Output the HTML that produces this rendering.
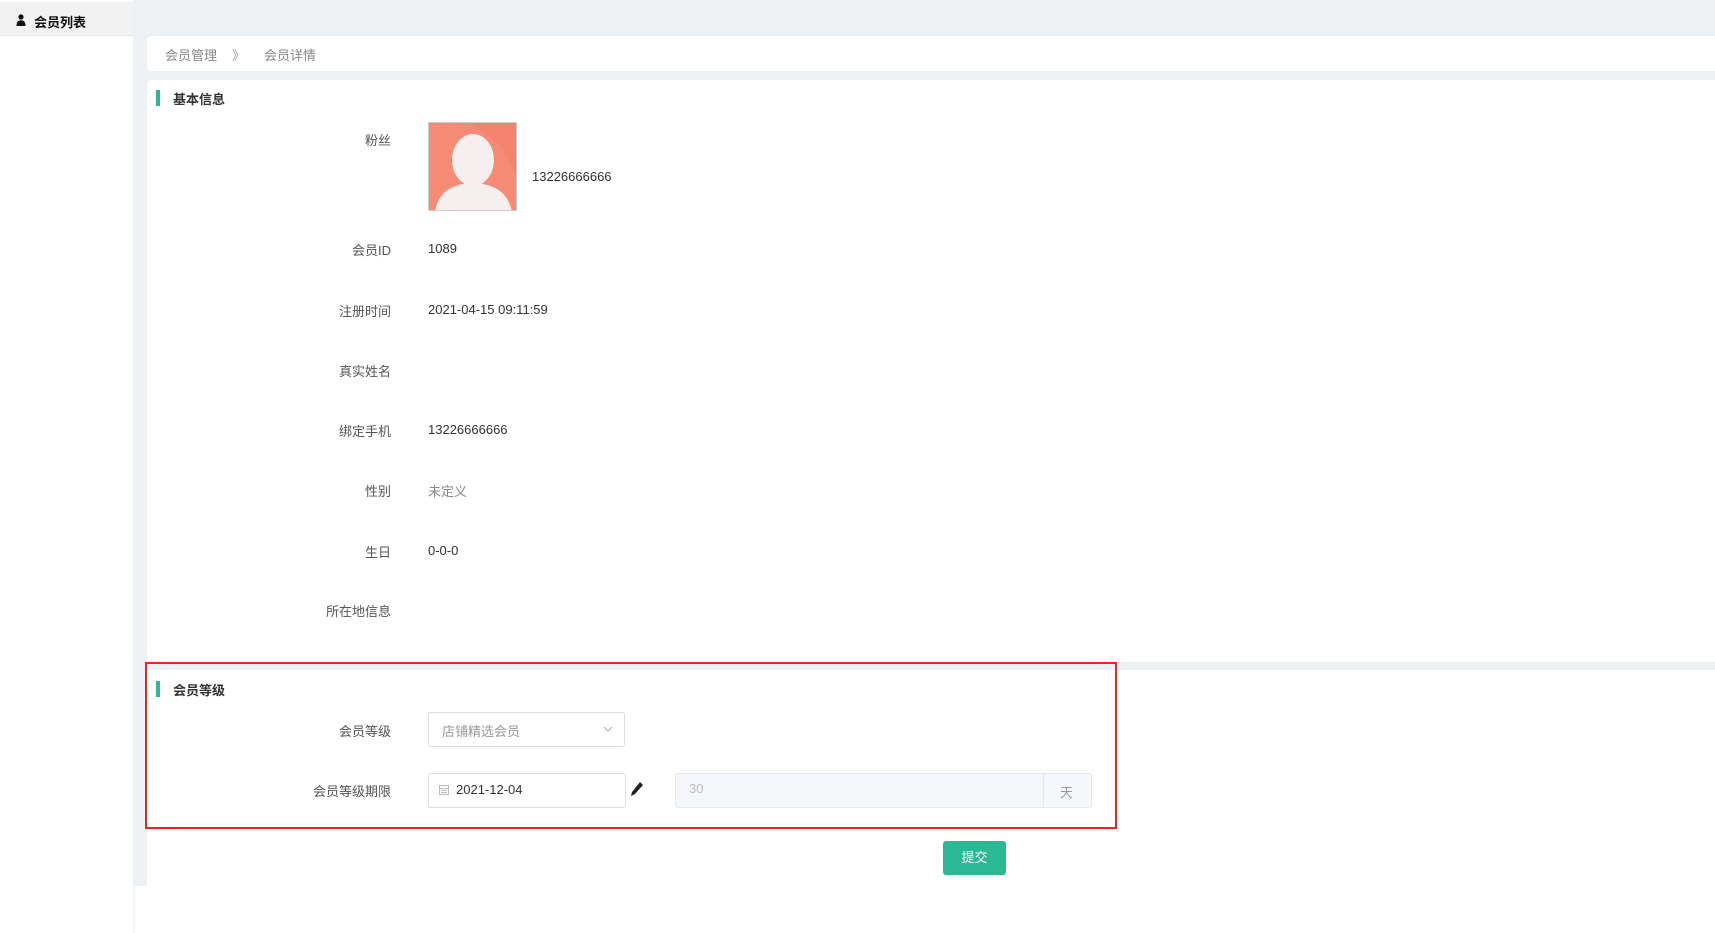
<!DOCTYPE html>
<html><head><meta charset="utf-8"><style>
*{margin:0;padding:0;box-sizing:border-box}
body{width:1715px;height:933px;overflow:hidden;background:#fff;font-family:"Liberation Sans","Noto Sans CJK SC",sans-serif;font-size:13px;color:#333;position:relative}
.a{position:absolute}
.lbl{position:absolute;right:1324px;color:#555;text-align:right;white-space:nowrap}
.val{position:absolute;left:428px;color:#333}
</style></head><body>
<div class="a" style="left:0;top:0;width:133px;height:933px;background:#fff;box-shadow:1px 0 3px rgba(0,0,0,.08)"></div>
<div class="a" style="left:0;top:2px;width:133px;height:34px;background:#f2f2f2;border-bottom:1px solid #e6e6e6"></div>
<svg class="a" style="left:16px;top:14px" width="10" height="12" viewBox="0 0 10 12"><circle cx="5" cy="3" r="2.6" fill="#111"/><path d="M0.5 12 Q0.5 6.3 5 6.3 Q9.5 6.3 9.5 12Z" fill="#111"/></svg>
<div class="a" style="left:34px;top:12px;font-weight:bold;color:#111">会员列表</div>
<div class="a" style="left:133px;top:0;width:1582px;height:886px;background:#eef1f4"></div>
<div class="a" style="left:147px;top:36px;width:1568px;height:35px;background:#fff;border-radius:4px 0 0 4px"></div>
<div class="a" style="left:165px;top:45px;color:#888;">会员管理</div>
<div class="a" style="left:232px;top:45px;color:#999;">》</div>
<div class="a" style="left:264px;top:45px;color:#888;">会员详情</div>
<div class="a" style="left:147px;top:80px;width:1568px;height:582px;background:#fff;border-radius:4px 0 0 0"></div>
<div class="a" style="left:156px;top:90px;width:4px;height:16px;background:#2bb894"></div>
<div class="a" style="left:173px;top:89px;font-weight:bold;color:#333">基本信息</div>
<div class="lbl" style="top:130px">粉丝</div>
<div class="a" style="left:428px;top:122px;width:89px;height:89px;background:#f58b74;border:1px solid #ccc;overflow:hidden">
<svg width="89" height="89" viewBox="0 0 89 89"><path d="M40 0 Q80 20 89 60 L89 0Z" fill="#f47a63" opacity=".5"/><ellipse cx="44" cy="37" rx="21" ry="26" fill="#f6efed"/><path d="M6 89 Q10 61 44 60 Q78 61 83 89Z" fill="#f6efed"/></svg></div>
<div class="val" style="left:532px;top:169px">13226666666</div>
<div class="lbl" style="top:240px">会员ID</div><div class="val" style="top:241px">1089</div>
<div class="lbl" style="top:301px">注册时间</div><div class="val" style="top:302px">2021-04-15 09:11:59</div>
<div class="lbl" style="top:361px">真实姓名</div>
<div class="lbl" style="top:421px">绑定手机</div><div class="val" style="top:422px">13226666666</div>
<div class="lbl" style="top:481px">性别</div><div class="val" style="top:481px;color:#888">未定义</div>
<div class="lbl" style="top:542px">生日</div><div class="val" style="top:543px">0-0-0</div>
<div class="lbl" style="top:601px">所在地信息</div>
<div class="a" style="left:147px;top:670px;width:1568px;height:158px;background:#fff"></div>
<div class="a" style="left:147px;top:828px;width:1568px;height:105px;background:#fff"></div>
<div class="a" style="left:145px;top:662px;width:972px;height:167px;border:2px solid #f5221b"></div>
<div class="a" style="left:156px;top:681px;width:4px;height:16px;background:#2bb894"></div>
<div class="a" style="left:173px;top:680px;font-weight:bold;color:#333">会员等级</div>
<div class="lbl" style="top:721px">会员等级</div>
<div class="a" style="left:428px;top:712px;width:197px;height:35px;border:1px solid #dcdfe6;border-radius:3px"></div>
<div class="a" style="left:442px;top:721px;color:#999">店铺精选会员</div>
<svg class="a" style="left:603px;top:725px" width="10" height="8"><path d="M1 2 L5 6 L9 2" fill="none" stroke="#aaa"/></svg>
<div class="lbl" style="top:781px">会员等级期限</div>
<div class="a" style="left:428px;top:773px;width:198px;height:35px;border:1px solid #dcdfe6;border-radius:3px"></div>
<svg class="a" style="left:439px;top:784px" width="10" height="11"><rect x="0.5" y="1.5" width="9" height="9" fill="none" stroke="#bbb"/><path d="M0.5 4.5H9.5M2 6.5H8M2 8.5H8" stroke="#bbb"/></svg>
<div class="a" style="left:456px;top:782px;color:#333">2021-12-04</div>
<svg class="a" style="left:630px;top:781px" width="14" height="16" viewBox="0 0 14 16"><path d="M10 1 L13 4 L5 13 L1 15 L2 11Z" fill="#222"/></svg>
<div class="a" style="left:675px;top:773px;width:417px;height:35px;background:#f5f7fa;border:1px solid #e4e7ed;border-radius:3px"></div>
<div class="a" style="left:1043px;top:774px;width:1px;height:33px;background:#e4e7ed"></div>
<div class="a" style="left:689px;top:781px;color:#bbb">30</div>
<div class="a" style="left:1060px;top:782px;color:#999">天</div>
<div class="a" style="left:943px;top:841px;width:63px;height:34px;background:#2bb894;border-radius:3px;color:#fff;text-align:center;line-height:34px">提交</div>
</body></html>
